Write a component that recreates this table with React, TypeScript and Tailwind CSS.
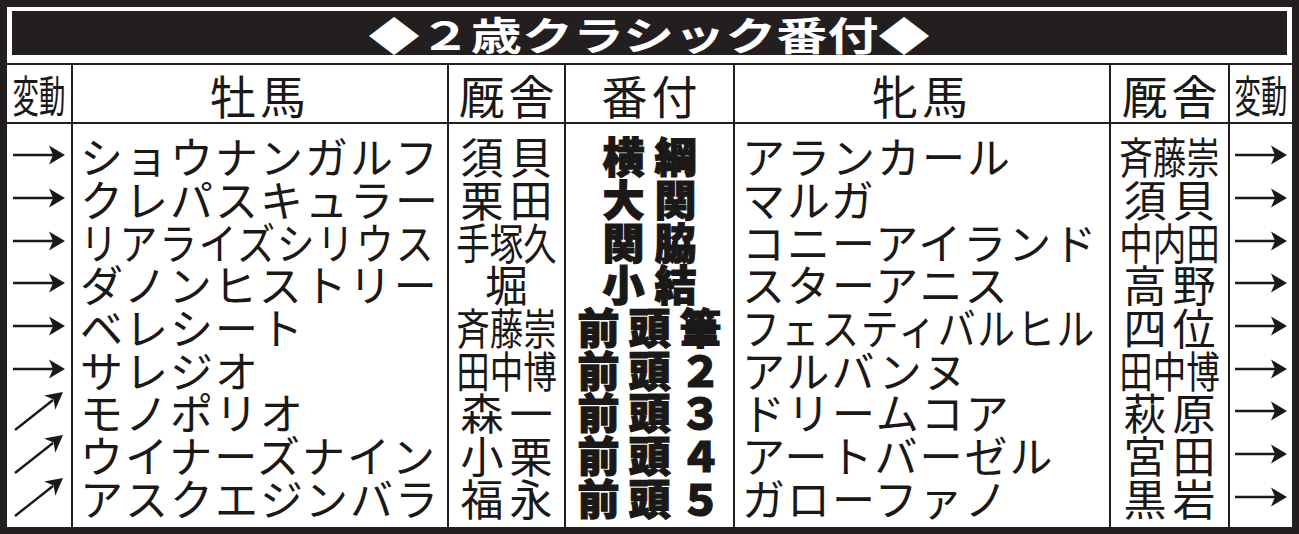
const rows: string[][] = [
  ['→', 'ショウナンガルフ', '須貝', '横綱', 'アランカール', '斉藤崇', '→'],
  ['→', 'クレパスキュラー', '栗田', '大関', 'マルガ', '須貝', '→'],
  ['→', 'リアライズシリウス', '手塚久', '関脇', 'コニーアイランド', '中内田', '→'],
  ['→', 'ダノンヒストリー', '堀', '小結', 'スターアニス', '高野', '→'],
  ['→', 'ベレシート', '斉藤崇', '前頭筆', 'フェスティバルヒル', '四位', '→'],
  ['→', 'サレジオ', '田中博', '前頭２', 'アルバンヌ', '田中博', '→'],
  ['↗', 'モノポリオ', '森一', '前頭３', 'ドリームコア', '萩原', '→'],
  ['↗', 'ウイナーズナイン', '小栗', '前頭４', 'アートバーゼル', '宮田', '→'],
  ['↗', 'アスクエジンバラ', '福永', '前頭５', 'ガローファノ', '黒岩', '→'],
];

const font = { fontFamily: '"Noto Sans CJK JP", "Noto Sans", sans-serif' };

// 変動 arrows, drawn so the long thin shaft and filled head match the print
function Arrow({ dir }: { dir: string }) {
  return (
    <div className="h-[42.7px] flex items-center justify-center">
      {dir === '↗' ? (
        <svg width="50" height="40" viewBox="0 0 50 40" aria-label="↗" className="overflow-visible">
          <line x1="1" y1="39" x2="39" y2="9" stroke="#1b1818" strokeWidth="2.4" />
          <path d="M49 1 L30.1 4.5 L39.6 8.5 L41.3 18.7 Z" fill="#1b1818" />
        </svg>
      ) : (
        <svg width="52" height="20" viewBox="0 0 52 20" aria-label="→">
          <line x1="0" y1="10" x2="40" y2="10" stroke="#1b1818" strokeWidth="2.4" />
          <path d="M52 10 L36 0.5 L40 10 L36 19.5 Z" fill="#1b1818" />
        </svg>
      )}
    </div>
  );
}

function Name({ text }: { text: string }) {
  const long = text.length > 8;
  return (
    <div className="h-[42.7px] flex items-center pl-[7px] whitespace-nowrap text-[43px] leading-[42px] tracking-[2px]">
      <span className={long ? 'inline-block origin-left scale-x-[0.88]' : 'inline-block'}>{text}</span>
    </div>
  );
}

function Stable({ text }: { text: string }) {
  const long = text.length > 2;
  return (
    <div className="h-[42.7px] flex items-center justify-center whitespace-nowrap text-[43px] leading-[42px]">
      <span className={long ? 'inline-block scale-x-[0.78]' : 'inline-block tracking-[6px] pl-[6px]'}>{text}</span>
    </div>
  );
}

function Rank({ text }: { text: string }) {
  return (
    <div className="h-[42.7px] flex items-center justify-center whitespace-nowrap text-[42px] leading-[42px] font-black [-webkit-text-stroke:1.2px_#1b1818]">
      <span className={text.length > 2 ? 'inline-block tracking-[9px] pl-[9px]' : 'inline-block tracking-[10px] pl-[10px]'}>
        {text}
      </span>
    </div>
  );
}

function Column({
  width,
  head,
  first,
  children,
}: {
  width: string;
  head: React.ReactNode;
  first?: boolean;
  children: React.ReactNode;
}) {
  return (
    <div className={`${width} flex flex-col ${first ? '' : 'border-l-2 border-[#231f20]'}`}>
      <div className="h-[59px] border-b-2 border-[#231f20] flex items-center justify-center whitespace-nowrap leading-none">
        {head}
      </div>
      <div className="pt-[10px]">{children}</div>
    </div>
  );
}

export default function App() {
  return (
    <div className="w-[1299px] h-[534px] bg-[#231f20] p-[7px] text-[#1b1818]" style={font}>
      <div className="w-full h-full bg-white flex flex-col">
        <div className="px-[5px] pt-[4px] pb-[8px]">
          <div className="h-[44px] bg-[#231f20] flex items-center justify-center text-white font-bold text-[39px] leading-none whitespace-nowrap">
            <span className="inline-block scale-x-[1.31]">◆２歳クラシック番付◆</span>
          </div>
        </div>
        <div className="flex-1 flex border-t-2 border-[#231f20]">
          <Column
            width="w-[64px]"
            first
            head={<span className="inline-block text-[44px] scale-x-[0.6]">変動</span>}
          >
            {rows.map((r, i) => (
              <Arrow key={i} dir={r[0]} />
            ))}
          </Column>
          <Column width="w-[376px]" head={<span className="text-[46px] tracking-[4px]">牡馬</span>}>
            {rows.map((r, i) => (
              <Name key={i} text={r[1]} />
            ))}
          </Column>
          <Column width="w-[117px]" head={<span className="text-[46px] tracking-[4px] pl-[4px]">厩舎</span>}>
            {rows.map((r, i) => (
              <Stable key={i} text={r[2]} />
            ))}
          </Column>
          <Column width="w-[169px]" head={<span className="text-[46px] tracking-[4px] pl-[4px]">番付</span>}>
            {rows.map((r, i) => (
              <Rank key={i} text={r[3]} />
            ))}
          </Column>
          <Column width="w-[376px]" head={<span className="text-[46px] tracking-[4px]">牝馬</span>}>
            {rows.map((r, i) => (
              <Name key={i} text={r[4]} />
            ))}
          </Column>
          <Column width="w-[119px]" head={<span className="text-[46px] tracking-[4px] pl-[4px]">厩舎</span>}>
            {rows.map((r, i) => (
              <Stable key={i} text={r[5]} />
            ))}
          </Column>
          <Column
            width="w-[64px]"
            head={<span className="inline-block text-[44px] scale-x-[0.6]">変動</span>}
          >
            {rows.map((r, i) => (
              <Arrow key={i} dir={r[6]} />
            ))}
          </Column>
        </div>
      </div>
    </div>
  );
}
